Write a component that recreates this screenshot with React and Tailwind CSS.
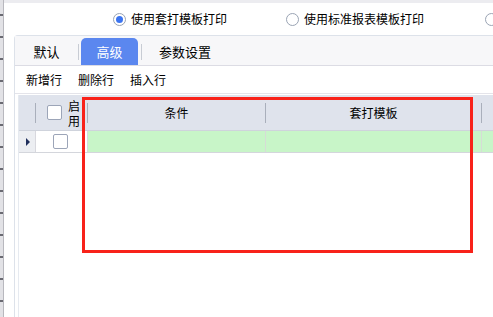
import React from "react";

const font = { fontFamily: '"Noto Sans CJK SC", "Noto Sans", sans-serif' };

function Radio({ checked }) {
  return (
    <span className="w-[13px] h-[13px] rounded-full border border-[#9aa4b4] bg-white flex items-center justify-center shrink-0">
      {checked && <span className="w-[7px] h-[7px] rounded-full bg-[#3b74f0]" />}
    </span>
  );
}

function Box({ className = "" }) {
  return <span className={"w-[15px] h-[15px] shrink-0 border border-[#9ca5b8] rounded-[2px] bg-white block " + className} />;
}

export default function App() {
  const ticks = Array.from({ length: 14 });
  return (
    <div className="w-[493px] h-[317px] flex bg-white overflow-hidden relative text-black" style={font}>
      {/* left ruler strip */}
      <div className="w-[4px] h-full shrink-0 bg-[#e2e2e6] border-r border-[#b8b8be] flex flex-col pt-[14px] gap-[20px]">
        {ticks.map((_, i) => (
          <span key={i} className="block w-[3px] h-[2px] bg-[#6a6a72]" />
        ))}
      </div>
      <div className="flex-1 flex flex-col min-w-0">
        <div className="h-[3px] bg-[#ececf0]" />
        {/* radio row */}
        <div className="h-[32px] flex items-center pl-[109px] text-[12px] leading-none whitespace-nowrap overflow-hidden">
          <div className="flex items-center gap-[5px] shrink-0">
            <Radio checked />
            <span>使用套打模板打印</span>
          </div>
          <div className="flex items-center gap-[5px] ml-[59px] shrink-0">
            <Radio />
            <span>使用标准报表模板打印</span>
          </div>
          <div className="flex items-center gap-[5px] ml-[61px] shrink-0">
            <Radio />
          </div>
        </div>
        {/* panel */}
        <div className="ml-[10px] flex-1 flex flex-col border-l border-t border-[#dde2ea] rounded-tl-[4px]">
          {/* tab bar */}
          <div className="h-[30px] bg-[#f7f7f9] border-b border-[#dcdce4] flex items-end text-[13px]">
            <div className="w-[63px] h-[27px] flex items-center justify-center">默认</div>
            <span className="w-[1px] h-[16px] bg-[#c8ccd4] mb-[5px]" />
            <div className="w-[57px] h-[27px] ml-[2px] bg-[#5b87ef] rounded-t-[5px] text-white flex items-center justify-center">高级</div>
            <span className="w-[1px] h-[16px] bg-[#c8ccd4] mb-[5px] ml-[3px]" />
            <div className="h-[27px] pl-[17px] flex items-center">参数设置</div>
          </div>
          {/* toolbar */}
          <div className="h-[28px] flex items-center pl-[11px] gap-[16px] text-[12px] border-b border-[#e4e4ea]">
            <span>新增行</span>
            <span>删除行</span>
            <span>插入行</span>
          </div>
          {/* grid */}
          <div className="ml-[3px] mt-[1px] flex flex-col border-l border-[#e6eaf0] flex-1">
            <div className="h-[36px] bg-[#dfe3ec] flex items-center text-[12px] border-b border-[#cfd3dc]">
              <div className="w-[17px] h-full flex items-center justify-end">
                <span className="w-[1px] h-[20px] bg-[#a9afbb]" />
              </div>
              <div className="w-[52px] h-full flex items-center pl-[11px]">
                <Box />
                <span className="ml-[6px] w-[13px] block break-all text-[12px] leading-[15px]">启用</span>
                <span className="ml-auto w-[1px] h-[20px] bg-[#a9afbb]" />
              </div>
              <div className="w-[178px] h-full flex items-center">
                <span className="flex-1 text-center">条件</span>
                <span className="w-[1px] h-[20px] bg-[#a9afbb]" />
              </div>
              <div className="w-[216px] h-full flex items-center">
                <span className="flex-1 text-center">套打模板</span>
                <span className="w-[1px] h-[20px] bg-[#a9afbb]" />
              </div>
              <div className="flex-1" />
            </div>
            <div className="h-[22px] flex border-b border-[#d4d6dc]">
              <div className="w-[17px] h-full bg-[#eceef2] border-r border-[#d8d8de] flex items-center pl-[7px]">
                <span className="w-0 h-0 border-y-[4px] border-y-transparent border-l-[4px] border-l-[#1f2f5c]" />
              </div>
              <div className="w-[52px] h-full bg-white border-r border-[#d8d8de] flex items-center pl-[17px]">
                <Box />
              </div>
              <div className="w-[178px] h-full bg-[#c8f5c8] border-r border-[#d6dcd6]" />
              <div className="w-[216px] h-full bg-[#c8f5c8] border-r border-[#d6dcd6]" />
              <div className="flex-1 h-full bg-[#c8f5c8]" />
            </div>
          </div>
        </div>
      </div>
      {/* red highlight */}
      <div className="absolute left-[82px] top-[97px] w-[391px] h-[156px] border-[3px] border-[#f8221a] pointer-events-none" />
    </div>
  );
}
